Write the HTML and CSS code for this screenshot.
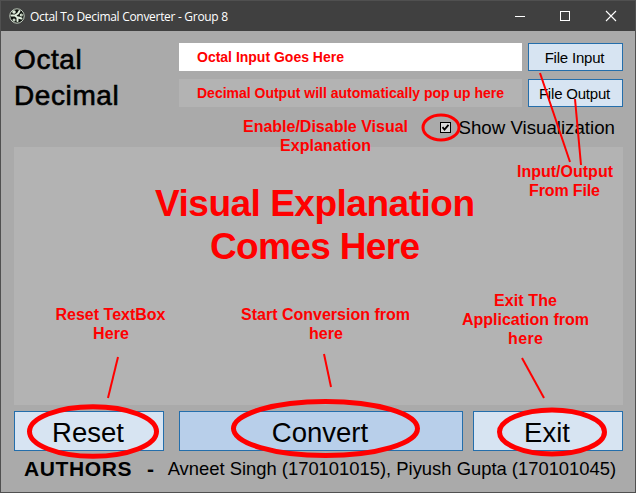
FILE: index.html
```html
<!DOCTYPE html>
<html lang="en">
<head>
<meta charset="utf-8">
<title>Octal To Decimal Converter - Group 8</title>
<link rel="stylesheet" href="styles.css">
</head>
<body>
<div class="window">
  <header class="titlebar">
    <svg class="app-icon" width="16" height="16" viewBox="0 0 16 16">
      <circle cx="8" cy="8" r="7.2" fill="#101510" stroke="#c3cec0" stroke-width="1"/>
      <g fill="#e3f0df" stroke="#e3f0df" stroke-width="2" stroke-linecap="round" stroke-linejoin="round">
        <circle cx="5" cy="4" r=".8"/><circle cx="12.300" cy="7" r=".5"/><circle cx="5" cy="12" r=".5"/>
        <path d="M2.500 7.500L6 7.500L9 5.500L10.500 3M6 7.500L8.500 9.500L8.500 13M9.500 9.500L12.500 10.500" fill="none"/>
      </g>
    </svg>
    <span class="title">Octal To Decimal Converter - Group 8</span>
    <svg class="controls" width="104" height="12" viewBox="0 0 104 12" fill="none" stroke="#fff">
      <path d="M1 6.500H11"/>
      <rect x="46.500" y="1.500" width="9" height="9"/>
      <path d="M92 1L102 11M102 1L92 11" stroke-width="1.1"/>
    </svg>
  </header>
  <main class="form">
    <div class="row">
      <span class="label">Octal</span>
      <div class="field input"></div>
      <button class="btn small">File Input</button>
    </div>
    <div class="row">
      <span class="label">Decimal</span>
      <div class="field"></div>
      <button class="btn small">File Output</button>
    </div>
    <div class="option">
      <svg width="11" height="11" viewBox="0 0 11 11">
        <rect x=".5" y=".5" width="10" height="10" fill="#dcdcdc" stroke="#000"/>
        <path d="M2.500 5.200L4.500 7.500L8.500 2.800" fill="none" stroke="#000" stroke-width="1.800"/>
      </svg>
      <span>Show Visualization</span>
    </div>
    <div class="canvas"></div>
    <div class="actions">
      <button class="btn">Reset</button>
      <button class="btn primary">Convert</button>
      <button class="btn">Exit</button>
    </div>
    <footer class="authors"><b>AUTHORS</b><b class="dash">-</b><span>Avneet Singh (170101015), Piyush Gupta (170101045)</span></footer>
  </main>
  <svg class="notes" width="636" height="493" viewBox="0 0 636 493">
    <g fill="none" stroke="#f00" stroke-width="2">
      <path d="M540 73L570 162"/><path d="M575 99L581 165"/>
      <path d="M118 357L108 398"/><path d="M324 354L331 387"/><path d="M522 358L544 398"/>
      <ellipse cx="441" cy="127.500" rx="18" ry="12.500" stroke-width="3"/>
      <g stroke-width="5">
        <ellipse cx="93" cy="431.500" rx="63.500" ry="24.800"/>
        <ellipse cx="325.500" cy="428.500" rx="92" ry="27"/>
        <ellipse cx="552" cy="432" rx="52.500" ry="22"/>
      </g>
    </g>
    <g class="note-text">
      <text x="197" y="61.500" font-size="14" textLength="147">Octal Input Goes Here</text>
      <text x="197" y="97.500" font-size="14" textLength="307">Decimal Output will automatically pop up here</text>
      <text x="243" y="131.500" textLength="165">Enable/Disable Visual</text>
      <text x="280" y="151" textLength="91">Explanation</text>
      <text x="517" y="177" textLength="96">Input/Output</text>
      <text x="529" y="196" textLength="71">From File</text>
      <text x="155" y="216" font-size="37" textLength="320">Visual Explanation</text>
      <text x="210" y="259" font-size="37" textLength="210">Comes Here</text>
      <text x="55.500" y="319.500" textLength="110">Reset TextBox</text>
      <text x="93" y="339" textLength="36">Here</text>
      <text x="241" y="319.500" textLength="169">Start Conversion from</text>
      <text x="309" y="339" textLength="34">here</text>
      <text x="494" y="305.500" textLength="63">Exit The</text>
      <text x="462" y="324.500" textLength="127">Application from</text>
      <text x="508" y="343.500" textLength="35">here</text>
    </g>
  </svg>
</div>
</body>
</html>
```
FILE: styles.css
```css
* { box-sizing: border-box; }
body { margin: 0; font-family: "Liberation Sans", Arial, sans-serif; color: #000; }
.window { position: relative; width: 636px; height: 493px; background: #aaa; border: 1px solid #505050; overflow: hidden; }
.titlebar { display: flex; align-items: center; height: 30px; padding: 0 17px 0 8px; background: #404040; color: #fff; }
.app-icon { margin-right: 5px; }
.title { font: 12px "Open Sans", "Noto Sans", sans-serif; letter-spacing: -0.3px; white-space: nowrap; }
.controls { margin-left: auto; }
.form { display: flex; flex-direction: column; padding: 12px 12px 0 13px; }
.row { display: grid; grid-template-columns: 165px 343px 6px 95px; grid-template-rows: 28px; height: 28px; margin-bottom: 8px; }
.row .btn { grid-column: 4; }
.label { font-size: 28px; line-height: 34px; letter-spacing: 0.6px; -webkit-text-stroke: 0.6px #000; }
.field { background: #b3b3b3; }
.field.input { background: #fff; }
.btn { font: 27.5px/1 "Liberation Sans", Arial, sans-serif; color: #000; background: #d7e4f2; border: 1px solid #246eab; padding: 4px 2px 0 0; margin: 0; }
.btn.small { font-size: 15px; letter-spacing: -0.2px; padding: 1px 2px 0 0; }
.btn.primary { background: #b8cfea; }
.option { display: flex; justify-content: flex-end; align-items: center; gap: 7px; height: 32px; padding: 0 8px 6px 0; font-size: 18.7px; }
.option svg { margin-bottom: 2px; }
.canvas { height: 258px; background: #b3b3b3; }
.actions { display: grid; grid-template-columns: 165px 294px 150px; height: 40px; margin-top: 6px; }
.actions .btn:first-child { margin-right: 15px; }
.actions .primary { margin-right: 10px; }
.authors { display: flex; align-items: center; height: 36px; padding-left: 10px; font-size: 18.4px; white-space: nowrap; }
.authors b { font-size: 21px; letter-spacing: 0.6px; }
.authors .dash { margin: 0 13px 0 15px; }
.notes { position: absolute; left: -1px; top: -1px; }
.note-text { fill: #f00; font-weight: bold; font-size: 16px; }
```
